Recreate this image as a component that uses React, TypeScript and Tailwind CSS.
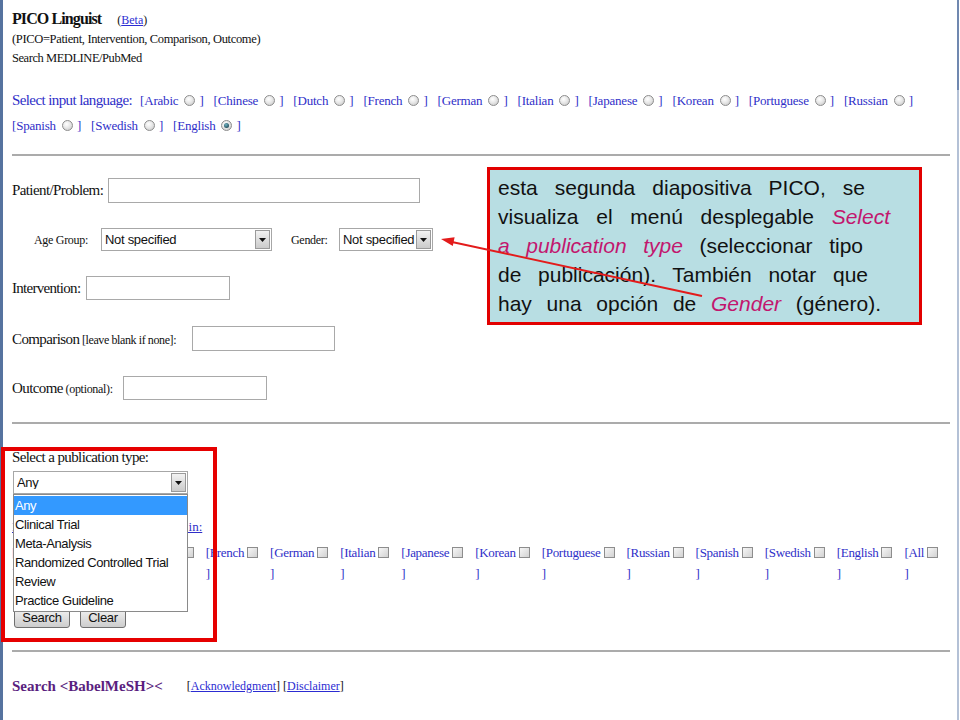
import React from 'react';

function Radio({ checked }: { checked?: boolean }) {
  return (
    <span className="inline-flex w-[11px] h-[11px] rounded-full border border-[#8d8d8d] bg-[radial-gradient(circle_at_40%_35%,#ffffff_0%,#e8e8e8_45%,#c2c2c2_100%)] items-center justify-center">
      {checked && (
        <span className="w-[5px] h-[5px] rounded-full bg-[radial-gradient(circle_at_40%_35%,#6fb4c4,#0b2a35)]" />
      )}
    </span>
  );
}

function Checkbox() {
  return (
    <span className="inline-block w-[11px] h-[11px] border border-[#8d8d8d] bg-linear-to-br from-[#f7f7f7] to-[#d2d2d2]" />
  );
}

function SelectBox({ className, text }: { className: string; text: string }) {
  return (
    <div className={'flex items-center border border-[#a7a7a7] bg-white pl-[3px] pr-[1px] ' + className}>
      <span className="flex-1 font-['Liberation_Sans'] text-[13px] tracking-[-0.3px] text-[#111] leading-none whitespace-nowrap overflow-hidden">
        {text}
      </span>
      <span className="w-[15px] h-[19px] border border-[#9a9a9a] bg-linear-to-b from-[#f2f2f2] to-[#cbcbcb] flex items-center justify-center shrink-0">
        <svg width="7" height="4" viewBox="0 0 7 4">
          <path d="M0 0H7L3.5 4Z" fill="#111" />
        </svg>
      </span>
    </div>
  );
}

function TextInput({ className }: { className: string }) {
  return <input readOnly className={'border border-[#a9a9a9] bg-white ' + className} />;
}

function LangRadio({ name, checked }: { name: string; checked?: boolean }) {
  return (
    <span className="inline-flex items-center mr-[10px] whitespace-nowrap">
      <span>[{name}</span>
      <span className="ml-[6px] mr-[4px] flex items-center">
        <Radio checked={checked} />
      </span>
      <span>]</span>
    </span>
  );
}

function LangCheck({ name }: { name: string }) {
  return (
    <div className="pr-[12px] flex flex-col leading-[21px]">
      <div className="flex items-center whitespace-nowrap">
        <span>[{name}</span>
        <span className="ml-[3px] flex items-center">
          <Checkbox />
        </span>
      </div>
      <div>]</div>
    </div>
  );
}

function Hr() {
  return <div className="h-[2px] bg-[#ababab]" />;
}

export default function App() {
  const row1 = ['Arabic', 'Chinese', 'Dutch', 'French', 'German', 'Italian', 'Japanese', 'Korean', 'Portuguese', 'Russian'];
  const checks = ['Arabic', 'Chinese', 'Dutch', 'French', 'German', 'Italian', 'Japanese', 'Korean', 'Portuguese', 'Russian', 'Spanish', 'Swedish', 'English', 'All'];
  const pubTypes = ['Any', 'Clinical Trial', 'Meta-Analysis', 'Randomized Controlled Trial', 'Review', 'Practice Guideline'];

  return (
    <div className="relative w-[960px] h-[720px] overflow-hidden bg-white font-['Liberation_Serif',serif] text-[#111]">
      <div className="flex h-[720px]">
        <div className="w-[3px] bg-[#56739f] shrink-0" />
        <main className="w-[954px] pl-[9px] pr-[7px] shrink-0">
          {/* header */}
          <div className="mt-[8px] h-[22px] leading-[22px] flex items-baseline whitespace-nowrap">
            <span className="font-bold text-[16px] tracking-[-0.9px]">PICO Linguist</span>
            <span className="ml-[16px] text-[12px]">
              (<span className="text-[#2c2cd2] underline">Beta</span>)
            </span>
          </div>
          <div className="h-[19px] leading-[19px] text-[12.5px] tracking-[-0.35px] whitespace-nowrap">
            (PICO=Patient, Intervention, Comparison, Outcome)
          </div>
          <div className="h-[19px] leading-[19px] text-[12.5px] tracking-[-0.45px] whitespace-nowrap">
            Search MEDLINE/PubMed
          </div>

          {/* input language */}
          <div className="mt-[20px] text-[#2f2fc8] text-[13px] tracking-[-0.2px]">
            <div className="h-[25px] flex items-center">
              <span className="text-[15px] tracking-[-0.6px] mr-[8px] whitespace-nowrap">Select input language:</span>
              {row1.map((n) => (
                <LangRadio key={n} name={n} />
              ))}
            </div>
            <div className="h-[25px] flex items-center">
              <LangRadio name="Spanish" />
              <LangRadio name="Swedish" />
              <LangRadio name="English" checked />
            </div>
          </div>

          <div className="mt-[16px]">
            <Hr />
          </div>

          {/* PICO fields */}
          <div className="mt-[22px] h-[25px] flex items-center">
            <span className="w-[96px] shrink-0 text-[15px] tracking-[-0.6px] whitespace-nowrap">Patient/Problem:</span>
            <TextInput className="w-[312px] h-[25px]" />
          </div>

          <div className="mt-[25px] h-[23px] flex items-center pl-[22px]">
            <span className="w-[67px] shrink-0 text-[12px] tracking-[-0.3px] whitespace-nowrap">Age Group:</span>
            <SelectBox className="w-[171px] h-[23px]" text="Not specified" />
            <span className="ml-[19px] w-[48px] shrink-0 text-[12px] tracking-[-0.3px] whitespace-nowrap">Gender:</span>
            <SelectBox className="w-[94px] h-[23px]" text="Not specified" />
          </div>

          <div className="mt-[25px] h-[24px] flex items-center">
            <span className="w-[74px] shrink-0 text-[15px] tracking-[-0.7px] whitespace-nowrap">Intervention:</span>
            <TextInput className="w-[144px] h-[24px]" />
          </div>

          <div className="mt-[26px] h-[25px] flex items-center">
            <span className="w-[180px] shrink-0 whitespace-nowrap">
              <span className="text-[15px] tracking-[-0.6px]">Comparison</span>
              <span className="text-[12px] tracking-[-0.4px]"> [leave blank if none]:</span>
            </span>
            <TextInput className="w-[143px] h-[25px]" />
          </div>

          <div className="mt-[25px] h-[24px] flex items-center">
            <span className="w-[111px] shrink-0 whitespace-nowrap">
              <span className="text-[15px] tracking-[-0.6px]">Outcome</span>
              <span className="text-[12px] tracking-[-0.3px]"> (optional):</span>
            </span>
            <TextInput className="w-[144px] h-[24px]" />
          </div>

          <div className="mt-[22px]">
            <Hr />
          </div>

          {/* publication type */}
          <div className="mt-[23px] h-[20px] leading-[20px] text-[15px] tracking-[-0.6px] whitespace-nowrap">
            Select a publication type:
          </div>
          <div className="relative mt-[4px] ml-[1px] w-[175px] h-[23px]">
            <SelectBox className="w-[175px] h-[23px]" text="Any" />
            <div className="absolute left-0 top-[23px] w-[175px] border border-[#8a8a8a] bg-white z-10 font-['Liberation_Sans'] text-[13px] tracking-[-0.4px] py-[1px]">
              {pubTypes.map((p, i) => (
                <div
                  key={p}
                  className={
                    i === 0
                      ? 'h-[19px] leading-[19px] pl-[1px] bg-[#3399ff] text-white whitespace-nowrap'
                      : 'h-[19px] leading-[19px] pl-[1px] text-[#111] whitespace-nowrap'
                  }
                >
                  {p}
                </div>
              ))}
            </div>
          </div>

          <div className="mt-[24px] h-[18px] leading-[18px] text-[13px] text-[#2f2fc8] underline whitespace-nowrap">
            Limit search to articles published in:
          </div>
          <div className="mt-[6px] flex text-[13px] tracking-[-0.3px] text-[#2f2fc8]">
            {checks.map((c) => (
              <LangCheck key={c} name={c} />
            ))}
          </div>

          <div className="mt-[23px] h-[21px] flex items-center gap-[10px] pl-[2px]">
            <button className="w-[56px] h-[21px] border border-[#707070] rounded-[3px] bg-linear-to-b from-[#f4f4f4] to-[#cdcdcd] font-['Liberation_Sans'] text-[13px] tracking-[-0.3px] text-[#111] leading-none">
              Search
            </button>
            <button className="w-[46px] h-[21px] border border-[#707070] rounded-[3px] bg-linear-to-b from-[#f4f4f4] to-[#cdcdcd] font-['Liberation_Sans'] text-[13px] tracking-[-0.3px] text-[#111] leading-none">
              Clear
            </button>
          </div>

          <div className="mt-[22px]">
            <Hr />
          </div>

          <div className="mt-[24px] h-[20px] flex items-center whitespace-nowrap">
            <span className="font-bold text-[15px] text-[#5a1f80]">Search &lt;BabelMeSH&gt;&lt;</span>
            <span className="ml-[24px] text-[12px]">
              [<span className="text-[#2c2cd2] underline">Acknowledgment</span>] [
              <span className="text-[#2c2cd2] underline">Disclaimer</span>]
            </span>
          </div>
        </main>
        <div className="w-[2px] shrink-0 flex flex-col">
          <div className="h-[90px] bg-[#7088b0]" />
          <div className="flex-1 bg-[#b4c1d6]" />
        </div>
        <div className="flex-1 bg-white" />
      </div>

      {/* annotation: red box around publication type */}
      <div className="absolute left-[1px] top-[447px] w-[216px] h-[195px] border-[4px] border-[#e60000] z-20 pointer-events-none" />

      {/* callout */}
      <div className="absolute left-[487px] top-[167px] w-[435px] h-[158px] border-[3px] border-[#e20000] bg-[#b8dee3] pl-[8px] pt-[3px] font-['Liberation_Sans',sans-serif] text-[21px] leading-[29px] text-[#111] z-20">
        <div className="w-[367px] text-justify [text-align-last:justify] whitespace-nowrap">esta segunda diapositiva PICO, se</div>
        <div className="w-[392px] text-justify [text-align-last:justify] whitespace-nowrap">
          visualiza el menú desplegable <span className="italic text-[#c2166e]">Select</span>
        </div>
        <div className="w-[365px] text-justify [text-align-last:justify] whitespace-nowrap">
          <span className="italic text-[#c2166e]">a publication type</span> (seleccionar tipo
        </div>
        <div className="w-[370px] text-justify [text-align-last:justify] whitespace-nowrap">de publicación). También notar que</div>
        <div className="w-[383px] text-justify [text-align-last:justify] whitespace-nowrap">
          hay una opción de <span className="italic text-[#c2166e]">Gender</span> (género).
        </div>
      </div>

      {/* arrow */}
      <svg className="absolute left-0 top-0 z-30 pointer-events-none" width="960" height="720" viewBox="0 0 960 720">
        <line x1="702" y1="296" x2="452" y2="242" stroke="#e31b1b" strokeWidth="2" />
        <polygon points="441,239 454.6,237.3 452.8,246.1" fill="#e31b1b" />
      </svg>
    </div>
  );
}
